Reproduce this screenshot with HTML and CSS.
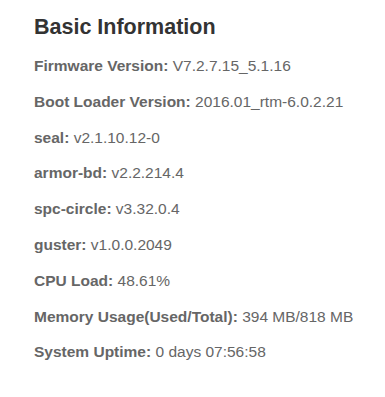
FILE: index.html
```html
<!DOCTYPE html>
<html lang="en">

<head>
    <meta charset="UTF-8">
    <meta name="viewport" content="width=device-width, initial-scale=1.0">
    <title>Basic Information</title>
    <link rel="stylesheet" href="styles.css">
</head>

<body>
    <main class="info">
        <h2 class="info-title">Basic Information</h2>
        <p class="info-row"><b>Firmware Version:</b> V7.2.7.15_5.1.16</p>
        <p class="info-row"><b>Boot Loader Version:</b> 2016.01_rtm-6.0.2.21</p>
        <p class="info-row"><b>seal:</b> v2.1.10.12-0</p>
        <p class="info-row"><b>armor-bd:</b> v2.2.214.4</p>
        <p class="info-row"><b>spc-circle:</b> v3.32.0.4</p>
        <p class="info-row"><b>guster:</b> v1.0.0.2049</p>
        <p class="info-row"><b>CPU Load:</b> 48.61%</p>
        <p class="info-row"><b>Memory Usage(Used/Total):</b> 394 MB/818 MB</p>
        <p class="info-row"><b>System Uptime:</b> 0 days 07:56:58</p>
    </main>
</body>

</html>
```
FILE: styles.css
```css
body {
    font-family: 'Liberation Sans', Arial, sans-serif;
    margin: 0;
    padding: 0;
    background-color: #fff;
}

.info {
    padding: 15px 0 15px 34px;
}

.info-title {
    font-size: 21.5px;
    font-weight: bold;
    color: #333;
    margin: 0 0 16px;
    line-height: 24px;
}

.info-row {
    font-size: 15.5px;
    line-height: 22px;
    color: #666;
    margin: 0 0 13.8px;
    white-space: nowrap;
}
```
